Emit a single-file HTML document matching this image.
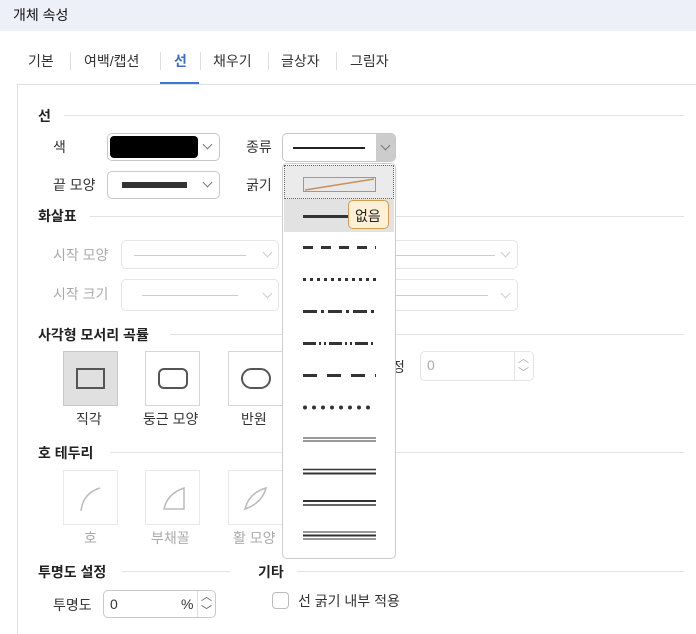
<!DOCTYPE html>
<html><head><meta charset="utf-8"><style>
*{margin:0;padding:0;box-sizing:border-box}
body{width:696px;height:634px;overflow:hidden;background:#fff;font-family:"Liberation Sans","Noto Sans CJK KR",sans-serif;font-size:14px;color:#333;position:relative}
.a{position:absolute;white-space:nowrap}
.h{font-weight:bold;color:#222}
.ln{position:absolute;height:1px;background:#e2e2e2}
.sel{position:absolute;border:1px solid #c8c8c8;border-radius:5px;background:#fff}
.dis{border-color:#e4e4e4}
.chev{position:absolute;width:7px;height:7px;border-right:1.3px solid #777;border-bottom:1.3px solid #777;transform:rotate(45deg)}
.dchev{border-color:#ccc}
.g{color:#aaa}
.btn{position:absolute;width:55px;height:55px;border:1px solid #d6d6d6;background:#fff}
.dl{position:absolute;left:303px;width:73px;height:3px;}
</style></head><body>
<div class="a" style="left:0;top:0;width:696px;height:31px;background:#edf0f8"></div>
<div class="a" style="left:13px;top:5px;font-size:14px;color:#111">개체 속성</div>

<div class="a" style="left:28px;top:51px">기본</div>
<div class="a" style="left:70px;top:52px;width:1px;height:18px;background:#ddd"></div>
<div class="a" style="left:84px;top:51px">여백/캡션</div>
<div class="a" style="left:160px;top:52px;width:1px;height:18px;background:#ddd"></div>
<div class="a" style="left:174px;top:51px;color:#3a6fc4;font-weight:bold">선</div>
<div class="a" style="left:160px;top:82px;width:39px;height:2px;background:#3a78d4"></div>
<div class="a" style="left:200px;top:52px;width:1px;height:18px;background:#ddd"></div>
<div class="a" style="left:213px;top:51px">채우기</div>
<div class="a" style="left:268px;top:52px;width:1px;height:18px;background:#ddd"></div>
<div class="a" style="left:281px;top:51px">글상자</div>
<div class="a" style="left:336px;top:52px;width:1px;height:18px;background:#ddd"></div>
<div class="a" style="left:350px;top:51px">그림자</div>

<div class="a" style="left:17px;top:84px;width:679px;height:1px;background:#e0e0e0"></div>
<div class="a" style="left:17px;top:84px;width:1px;height:550px;background:#e0e0e0"></div>

<div class="a h" style="left:38px;top:106px">선</div><div class="ln" style="left:64px;top:115px;width:620px"></div>
<div class="a" style="left:53px;top:137px">색</div>
<div class="sel" style="left:107px;top:133px;width:113px;height:28px"><div class="a" style="left:2px;top:2px;width:88px;height:22px;background:#000;border-radius:4px"></div><div class="chev" style="left:96px;top:7px"></div></div>
<div class="a" style="left:246px;top:137px">종류</div>
<div class="sel" style="left:282px;top:133px;width:114px;height:29px;overflow:hidden"><div class="a" style="left:10px;top:13px;width:72px;height:2px;background:#222"></div><div class="a" style="left:93px;top:0;width:20px;height:29px;background:#ccc"></div><div class="chev" style="left:99px;top:8px"></div></div>
<div class="a" style="left:53px;top:175px">끝 모양</div>
<div class="sel" style="left:107px;top:171px;width:113px;height:28px"><div class="a" style="left:14px;top:10px;width:65px;height:6px;background:#333"></div><div class="chev" style="left:96px;top:7px"></div></div>
<div class="a" style="left:246px;top:175px">굵기</div>

<div class="a h" style="left:38px;top:206px">화살표</div><div class="ln" style="left:90px;top:216px;width:594px"></div>
<div class="a g" style="left:53px;top:245px">시작 모양</div>
<div class="sel dis" style="left:121px;top:240px;width:158px;height:29px"><div class="a" style="left:12px;top:14px;width:112px;height:1px;background:#ccc"></div><div class="chev dchev" style="left:142px;top:8px"></div></div>
<div class="sel dis" style="left:380px;top:240px;width:138px;height:29px"><div class="a" style="left:0;top:14px;width:114px;height:1px;background:#ccc"></div><div class="chev dchev" style="left:121px;top:8px"></div></div>
<div class="a g" style="left:53px;top:284px">시작 크기</div>
<div class="sel dis" style="left:121px;top:279px;width:158px;height:32px"><div class="a" style="left:20px;top:15px;width:96px;height:1px;background:#ccc"></div><div class="chev dchev" style="left:142px;top:10px"></div></div>
<div class="sel dis" style="left:380px;top:279px;width:138px;height:32px"><div class="a" style="left:0;top:15px;width:107px;height:1px;background:#ccc"></div><div class="chev dchev" style="left:121px;top:10px"></div></div>

<div class="a h" style="left:38px;top:325px">사각형 모서리 곡률</div><div class="ln" style="left:170px;top:334px;width:514px"></div>
<div class="btn" style="left:63px;top:351px;background:#e0e0e0;border-color:#c8c8c8"><div class="a" style="left:12px;top:16px;width:29px;height:21px;border:2px solid #555"></div></div>
<div class="btn" style="left:145px;top:351px"><div class="a" style="left:12px;top:16px;width:30px;height:21px;border:2px solid #555;border-radius:6px"></div></div>
<div class="btn" style="left:228px;top:351px"><div class="a" style="left:12px;top:16px;width:30px;height:21px;border:2px solid #555;border-radius:11px"></div></div>
<div class="a" style="left:76px;top:409px">직각</div>
<div class="a" style="left:143px;top:409px">둥근 모양</div>
<div class="a" style="left:241px;top:409px">반원</div>
<div class="a" style="left:392px;top:357px">정</div>
<div class="sel dis" style="left:420px;top:351px;width:114px;height:30px"><div class="a g" style="left:6px;top:5px">0</div><div class="a" style="left:93px;top:0;width:1px;height:28px;background:#e4e4e4"></div><div class="a g" style="left:97px;top:-2px;font-size:11px">︿</div><div class="a g" style="left:97px;top:12px;font-size:11px">﹀</div></div>

<div class="a h" style="left:38px;top:443px">호 테두리</div><div class="ln" style="left:110px;top:452px;width:574px"></div>
<div class="btn" style="left:63px;top:470px;border-color:#e8e8e8"><svg class="a" style="left:0;top:0" width="55" height="55"><path d="M17 40 Q19 22 36 17" fill="none" stroke="#bbb" stroke-width="1.5"/></svg></div>
<div class="btn" style="left:145px;top:470px;border-color:#e8e8e8"><svg class="a" style="left:0;top:0" width="55" height="55"><path d="M18 38 Q21 23 38 17 L38 38 Z" fill="none" stroke="#bbb" stroke-width="1.5"/></svg></div>
<div class="btn" style="left:228px;top:470px;border-color:#e8e8e8"><svg class="a" style="left:0;top:0" width="55" height="55"><path d="M16 38 Q20 22 37 17 Q33 32 16 38 Z" fill="none" stroke="#bbb" stroke-width="1.5"/></svg></div>
<div class="a g" style="left:84px;top:528px">호</div>
<div class="a g" style="left:151px;top:528px">부채꼴</div>
<div class="a g" style="left:233px;top:528px">활 모양</div>

<div class="a h" style="left:38px;top:562px">투명도 설정</div><div class="ln" style="left:122px;top:571px;width:108px"></div>
<div class="a h" style="left:258px;top:562px">기타</div><div class="ln" style="left:297px;top:571px;width:387px"></div>
<div class="a" style="left:53px;top:595px">투명도</div>
<div class="sel" style="left:103px;top:590px;width:113px;height:28px"><div class="a" style="left:6px;top:5px">0</div><div class="a" style="left:77px;top:5px">%</div><div class="a" style="left:93px;top:0;width:1px;height:26px;background:#ddd"></div><div class="a" style="left:97px;top:-3px;font-size:11px;color:#555">︿</div><div class="a" style="left:97px;top:11px;font-size:11px;color:#555">﹀</div></div>
<div class="a" style="left:272px;top:592px;width:17px;height:17px;border:1px solid #bbb;border-radius:4px"></div>
<div class="a" style="left:298px;top:591px">선 굵기 내부 적용</div>

<!-- dropdown -->
<div class="a" style="left:282px;top:163px;width:114px;height:396px;background:#fff;border:1px solid #ccc;border-radius:5px"></div>
<div class="a" style="left:284px;top:165px;width:110px;height:34px;background:#ebebeb;border:1px dotted #666"></div>
<svg class="a" style="left:303px;top:177px" width="73" height="15"><rect x="0.5" y="0.5" width="72" height="14" fill="#e8e8e8" stroke="#999"/><line x1="2" y1="13" x2="71" y2="2" stroke="#c8905a" stroke-width="1.5"/></svg>
<div class="a" style="left:284px;top:199px;width:110px;height:33px;background:#e2e2e2"></div>
<div class="dl" style="top:215px;width:50px;background:#333"></div>
<div class="a" style="left:348px;top:200px;width:41px;height:29px;background:#fdf0d5;border:1px solid #d29c55;border-radius:5px;color:#222;padding:5px 0 0 6px">없음</div>
<svg class="a" style="left:300px;top:240px" width="80" height="310" stroke="#333" fill="none">
<line x1="3" y1="7.5" x2="76" y2="7.5" stroke-width="3" stroke-dasharray="10,8"/>
<line x1="3" y1="39.5" x2="76" y2="39.5" stroke-width="3" stroke-dasharray="3,4"/>
<line x1="3" y1="71.5" x2="76" y2="71.5" stroke-width="3" stroke-dasharray="14,4,3,4"/>
<line x1="3" y1="103.5" x2="76" y2="103.5" stroke-width="3" stroke-dasharray="13,3,2,3,2,3"/>
<line x1="3" y1="135.5" x2="76" y2="135.5" stroke-width="3" stroke-dasharray="14,10"/>
<line x1="5" y1="167.5" x2="76" y2="167.5" stroke-width="4" stroke-linecap="round" stroke-dasharray="0,9"/>
<line x1="3" y1="198" x2="76" y2="198" stroke-width="1"/><line x1="3" y1="201" x2="76" y2="201" stroke-width="1"/>
<line x1="3" y1="229.5" x2="76" y2="229.5" stroke-width="1.5"/><line x1="3" y1="233.5" x2="76" y2="233.5" stroke-width="2"/>
<line x1="3" y1="261" x2="76" y2="261" stroke-width="2"/><line x1="3" y1="265" x2="76" y2="265" stroke-width="1.5"/>
<line x1="3" y1="292" x2="76" y2="292" stroke-width="1"/><line x1="3" y1="295.5" x2="76" y2="295.5" stroke-width="2"/><line x1="3" y1="299" x2="76" y2="299" stroke-width="1"/>
</svg>
</body></html>
